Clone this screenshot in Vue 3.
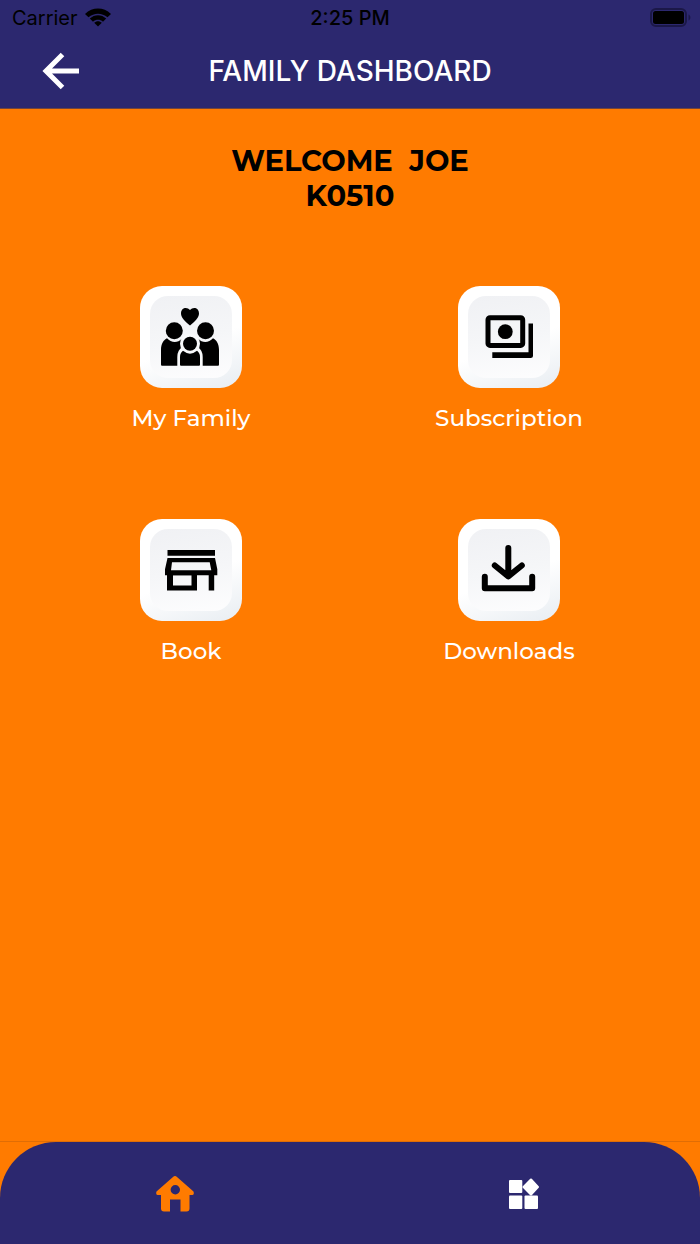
<script setup>
import { ref } from 'vue'

const user = { name: 'JOE', code: 'K0510' }

const tiles = [
  { id: 'family', label: 'My Family' },
  { id: 'subscription', label: 'Subscription' },
  { id: 'book', label: 'Book' },
  { id: 'downloads', label: 'Downloads' },
]

const activeTab = ref('home')
</script>

<template>
  <div class="screen">
    <header class="header">
      <div class="status-bar">
        <div class="carrier">
          <span>Carrier</span>
          <svg class="wifi" viewBox="0 0 26 20" aria-hidden="true">
            <path d="M0 6C7.500-1.300 18.500-1.300 26 6L22.500 9.300C17 4.500 9 4.500 3.500 9.300Z" />
            <path d="M4.800 10.600C9.500 6 16.500 6 21.200 10.600L18 13.700C15 11.200 11 11.200 8 13.700Z" />
            <path d="M9.200 14.800C11.500 12.700 14.500 12.700 16.800 14.800L13 18.600Z" />
          </svg>
        </div>
        <span class="time">2:25 PM</span>
        <svg class="battery" viewBox="0 0 42 20" aria-hidden="true">
          <rect class="battery-case" x="1" y="1" width="35" height="17" rx="5" />
          <rect x="3" y="3" width="31" height="13" rx="2.500" />
          <path class="battery-tip" d="M38.500 6.500c2.500 1 2.500 5 0 6z" />
        </svg>
      </div>

      <div class="title-bar">
        <button class="back" type="button" aria-label="Back">
          <svg viewBox="0 0 38 38" aria-hidden="true">
            <path d="M20.500 2.500L4 19L20.500 35.500M4 19H37" />
          </svg>
        </button>
        <h1 class="title">FAMILY DASHBOARD</h1>
      </div>
    </header>

    <main class="content">
      <h2 class="welcome">
        <span class="greeting">WELCOME&nbsp; {{ user.name }}</span>
        <span>{{ user.code }}</span>
      </h2>

      <div class="tiles">
        <button v-for="tile in tiles" :key="tile.id" class="tile" type="button">
          <span class="tile-icon">
            <span class="tile-face"></span>
            <svg viewBox="0 0 102 102" aria-hidden="true">
              <g v-if="tile.id === 'family'">
                <path d="M50 39.500C45 35.500 41 31.500 41 27.500C41 21.500 47 20.500 50 24C53 20.500 59 21.500 59 27.500C59 31.500 55 35.500 50 39.500Z" />
                <circle cx="34.300" cy="44.700" r="8.500" />
                <circle cx="65.500" cy="44.700" r="8.500" />
                <path d="M21 78.500V64C21 58 23.500 54 27 52.300C31 57 38 57 41.500 53L43.500 55V79.700H22Q21 79.700 21 78.500Z" />
                <path d="M79 78.500V64C79 58 76.500 54 73 52.300C69 57 62 57 58.500 53L56.500 55V79.700H78Q79 79.700 79 78.500Z" />
                <circle class="gap" cx="50" cy="57.700" r="10" />
                <path class="gap" d="M37.300 80V71Q37.300 64 42.500 61H57.500Q62.700 64 62.700 71V80Z" />
                <circle cx="50" cy="57.700" r="7" />
                <path d="M40 78.700V71Q40 67 43 64.800Q50 70.500 57 64.800Q60 67 60 71V78.700Q60 79.700 59 79.700H41Q40 79.700 40 78.700Z" />
              </g>
              <g v-else-if="tile.id === 'subscription'">
                <rect class="line" x="30" y="31.700" width="34.700" height="27.700" rx="2" stroke-width="5" />
                <circle cx="47.300" cy="45.700" r="7.400" />
                <path d="M70.500 37.500H75V69.500Q75 72 72.500 72H34.300V66.300H70.500Z" />
              </g>
              <g v-else-if="tile.id === 'book'">
                <path d="M27.500 31H75V36.700H27.500Z" />
                <path
                  fill-rule="evenodd"
                  d="M27.500 39H75L77.300 50.300V56.300H25V50.300ZM32 43.300L31 51.200H71.300L69.700 43.300Z"
                />
                <path fill-rule="evenodd" d="M27 56H57V71.500H27ZM33 56.300V66.500H51.500V56.300Z" />
                <path d="M68.700 56H74.200V71.500H68.700Z" />
              </g>
              <g v-else class="line rounded">
                <path d="M50.300 29V57M36.800 46.500L50.300 57.500L63.800 46.500" />
                <path d="M26.800 57.800V69.300H74.200V57.800" />
              </g>
            </svg>
          </span>
          <span class="tile-label">{{ tile.label }}</span>
        </button>
      </div>
    </main>

    <div class="footer">
      <nav class="tab-bar">
        <button
          class="tab"
          :class="{ active: activeTab === 'home' }"
          type="button"
          aria-label="Home"
          @click="activeTab = 'home'"
        >
          <svg viewBox="0 0 38 36" aria-hidden="true">
            <path
              fill-rule="evenodd"
              d="M19 0Q20 0 21 1L37.500 15.500Q38.500 18.500 36.500 19H33.500V32.500Q33.500 35.500 30.500 35.500H24.500V23.500H14V35.500H8Q5 35.500 5 32.500V19H1.500Q-.500 18.500 .500 15.500L17 1Q18 0 19 0ZM19.300 9a4.700 4.700 0 1 0 0 9.400a4.700 4.700 0 1 0 0-9.400Z"
            />
          </svg>
        </button>
        <button
          class="tab"
          :class="{ active: activeTab === 'more' }"
          type="button"
          aria-label="More"
          @click="activeTab = 'more'"
        >
          <svg viewBox="0 0 38 36" aria-hidden="true">
            <rect x="3" y="4" width="13.300" height="13" rx="1" />
            <rect x="3" y="19.500" width="13.300" height="13.500" rx="1" />
            <rect x="18.500" y="19.500" width="13.500" height="13.500" rx="1" />
            <path d="M24.200 2.800L16.800 10.200Q16 11 16.800 11.800L24.200 19.200Q25 20 25.800 19.200L32.700 11.800Q33.500 11 32.700 10.200L25.800 2.800Q25 2 24.200 2.800Z" />
          </svg>
        </button>
      </nav>
    </div>
  </div>
</template>

<style>
body {
  margin: 0;
  background: #ff7b00;
}
</style>

<style scoped>
.screen {
  display: flex;
  flex-direction: column;
  min-height: 100vh;
  background: #ff7b00;
  font-family: Inter, Roboto, sans-serif;
}

button {
  padding: 0;
  border: none;
  background: none;
  font: inherit;
  cursor: pointer;
}

svg {
  display: block;
}

.header {
  background: #2c286f;
  border-bottom: 1px solid #70453f;
}

.status-bar {
  display: grid;
  grid-template-columns: 1fr auto 1fr;
  align-items: center;
  height: 36px;
  padding: 0 8px;
  font-size: 20px;
  color: #000;
}

.carrier {
  display: flex;
  align-items: center;
  gap: 7px;
  padding-left: 4px;
}

.wifi {
  width: 26px;
  height: 20px;
}

.time {
  font-weight: 500;
}

.battery {
  justify-self: end;
  width: 42px;
  height: 20px;
}

.battery-case {
  fill: none;
  stroke: #1b1848;
  stroke-width: 2;
}

.battery-tip {
  fill: #1b1848;
}

.title-bar {
  display: grid;
  grid-template-columns: 1fr auto 1fr;
  align-items: center;
  height: 70px;
  padding: 0 42px 2px;
}

.back {
  justify-self: start;
}

.back svg {
  width: 38px;
  height: 38px;
  fill: none;
  stroke: #fff;
  stroke-width: 5;
}

.title {
  margin: 0;
  font-size: 28px;
  font-weight: 500;
  line-height: 36px;
  color: #fff;
}

.content {
  flex: 1;
  padding: 34px 32px;
}

.welcome {
  display: flex;
  flex-direction: column;
  align-items: center;
  margin: 0;
  font-family: Montserrat, Inter, sans-serif;
  font-size: 29px;
  font-weight: 700;
  line-height: 35px;
  color: #000;
}

.greeting {
  white-space: pre;
}

.tiles {
  display: grid;
  grid-template-columns: 1fr 1fr;
  row-gap: 85px;
  margin-top: 73px;
}

.tile {
  display: flex;
  flex-direction: column;
  align-items: center;
  gap: 14px;
}

.tile-icon {
  display: grid;
  width: 102px;
  height: 102px;
  border-radius: 22px;
  background: linear-gradient(160deg, #fff 55%, #e8edf2);
}

.tile-icon > * {
  grid-area: 1 / 1;
}

.tile-face {
  margin: 10px;
  border-radius: 18px;
  background: linear-gradient(170deg, #f0f1f4, #f5f6f8 50%, #fdfdfe);
}

.gap {
  fill: #f8f9fa;
}

.line {
  fill: none;
  stroke: #000;
}

.rounded {
  stroke-width: 6;
  stroke-linecap: round;
  stroke-linejoin: round;
}

.tile-label {
  font-family: Montserrat, Inter, sans-serif;
  font-size: 23px;
  font-weight: 500;
  line-height: 32px;
  color: #fff;
}

.footer {
  border-top: 1px solid #e06d05;
}

.tab-bar {
  display: grid;
  grid-template-columns: 1fr 1fr;
  height: 102px;
  border-radius: 56px 56px 0 0;
  background: #2c286f;
}

.tab {
  display: flex;
  align-items: center;
  justify-content: center;
  padding-top: 2px;
  color: #fff;
}

.tab.active {
  color: #ff7b00;
}

.tab svg {
  width: 38px;
  height: 36px;
  fill: currentColor;
}
</style>
